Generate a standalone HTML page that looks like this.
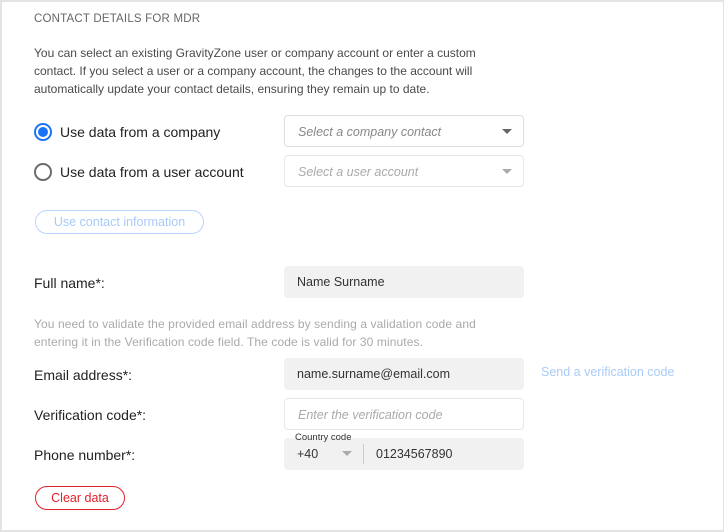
<!DOCTYPE html>
<html><head><style>
*{box-sizing:border-box;margin:0;padding:0}
body{width:724px;height:532px;background:#fff;font-family:"Liberation Sans",sans-serif;position:relative;overflow:hidden}
.frame{position:absolute;left:0;top:0;width:724px;height:532px;border:2px solid #e3e3e3;border-right-width:1px}
.a{position:absolute;white-space:nowrap}
.h{left:34px;top:13px;font-size:11.5px;color:#666;letter-spacing:.2px}
.p{left:34px;font-size:12px;color:#4a4a4a}
.lbl{left:34px;font-size:14px;color:#222}
.radio{position:absolute;left:34px;width:18px;height:18px;border-radius:50%;border:2px solid #6b6b6b}
.radio.on{border-color:#1a73f5}
.radio.on::after{content:"";position:absolute;left:2px;top:2px;width:10px;height:10px;border-radius:50%;background:#1a73f5}
.box{position:absolute;left:284px;width:240px;height:32px;border-radius:4px;font-size:12.5px;padding-left:13px;line-height:32px}
.sel{border:1px solid #ddd;color:#888;font-style:italic}
.sel.dim{color:#aaa;border-color:#e6e6e6}
.fill{background:#f1f1f1;color:#333}
.tri{position:absolute;right:11px;top:13px;border-left:5px solid transparent;border-right:5px solid transparent;border-top:5px solid #666}
.btn{position:absolute;border-radius:12px;font-size:12.5px;text-align:center;line-height:23px;height:24px}
.gray{color:#aaa;font-size:12px;left:34px;letter-spacing:.1px}
</style></head><body>
<div class="frame"></div>
<div class="a h">CONTACT DETAILS FOR MDR</div>
<div class="a p" style="top:46px">You can select an existing GravityZone user or company account or enter a custom</div>
<div class="a p" style="top:64px">contact. If you select a user or a company account, the changes to the account will</div>
<div class="a p" style="top:82px">automatically update your contact details, ensuring they remain up to date.</div>
<div class="radio on" style="top:123px"></div>
<div class="a lbl" style="left:60px;top:124px">Use data from a company</div>
<div class="radio" style="top:163px"></div>
<div class="a lbl" style="left:60px;top:164px">Use data from a user account</div>
<div class="box sel" style="top:115px">Select a company contact<span class="tri"></span></div>
<div class="box sel dim" style="top:155px">Select a user account<span class="tri" style="border-top-color:#aaa"></span></div>
<div class="btn" style="left:35px;top:210px;width:169px;border:1px solid #b9d6fb;color:#a9cbf7">Use contact information</div>
<div class="a lbl" style="top:275px">Full name*:</div>
<div class="box fill" style="top:266px">Name Surname</div>
<div class="a gray" style="top:317px">You need to validate the provided email address by sending a validation code and</div>
<div class="a gray" style="top:335px">entering it in the Verification code field. The code is valid for 30 minutes.</div>
<div class="a lbl" style="top:367px">Email address*:</div>
<div class="box fill" style="top:358px">name.surname@email.com</div>
<div class="a" style="left:541px;top:365px;font-size:12.5px;color:#a9cbf7">Send a verification code</div>
<div class="a lbl" style="top:407px">Verification code*:</div>
<div class="box sel dim" style="top:398px;border-color:#e6e6e6">Enter the verification code</div>
<div class="a lbl" style="top:447px">Phone number*:</div>
<div class="box fill" style="top:438px;padding-left:0">
 <span class="a" style="left:13px;top:8px;line-height:16px">+40</span>
 <span style="position:absolute;left:58px;top:13px;border-left:5px solid transparent;border-right:5px solid transparent;border-top:5px solid #aaa"></span>
 <span style="position:absolute;left:79px;top:6px;width:1px;height:20px;background:#ccc"></span>
 <span class="a" style="left:92px;top:8px;line-height:16px">01234567890</span>
</div>
<div class="a" style="left:295px;top:432px;font-size:9.5px;color:#333">Country code</div>
<div class="btn" style="left:35px;top:486px;width:90px;border:1px solid #e0202a;color:#e0202a">Clear data</div>
</body></html>
